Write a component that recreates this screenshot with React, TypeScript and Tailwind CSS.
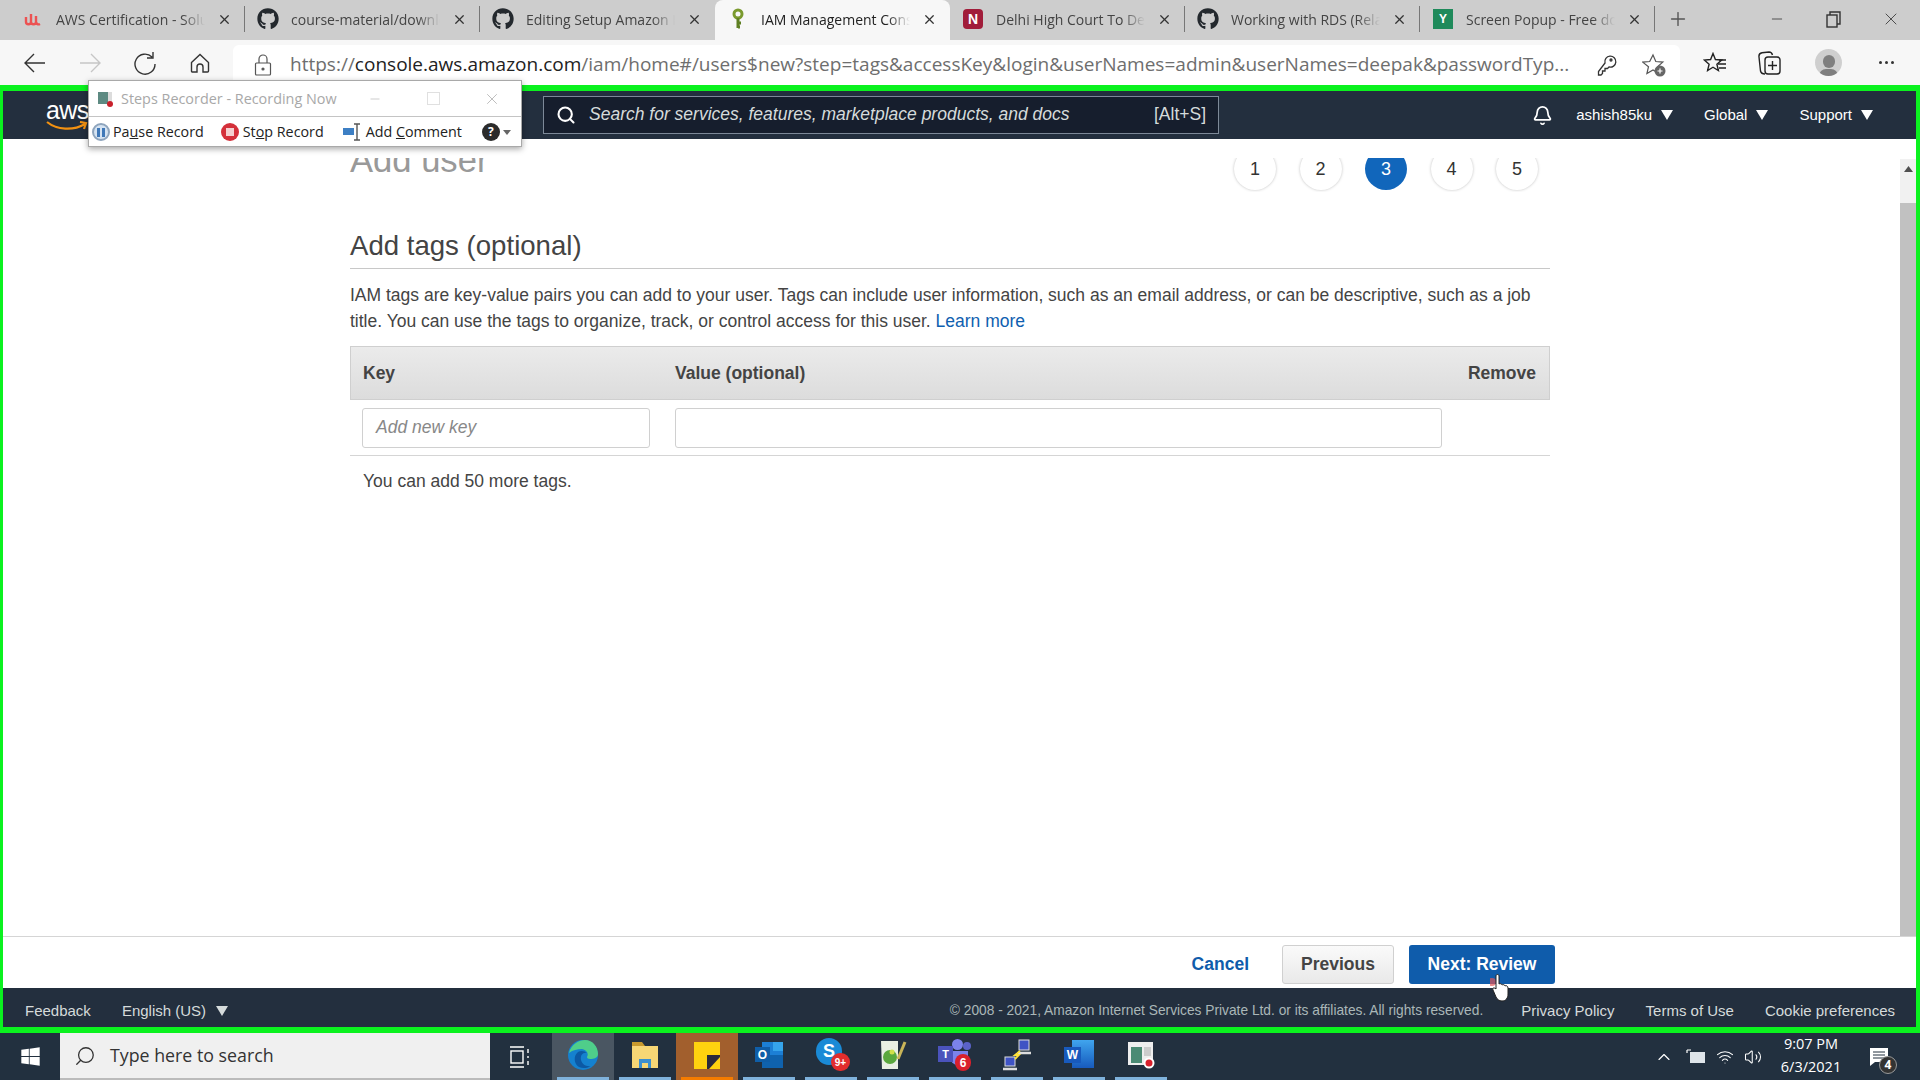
import React from "react";
import { Plus, X, Minus, Search, Bell, ChevronUp, Wifi, Volume2 } from "lucide-react";
import { FaGithub, FaWindows } from "react-icons/fa";

const uiFont = "font-['Open_Sans',sans-serif]";
const awsFont = "font-['Liberation_Sans',Arial,sans-serif]";

const Caret = ({ className = "" }: { className?: string }) => (
  <svg width="12" height="10" viewBox="0 0 12 10" className={className}>
    <path d="M0 0h12L6 10z" fill="currentColor" />
  </svg>
);

const Udemy = () => (
  <svg width="20" height="20" viewBox="0 0 20 20">
    <path d="M3 8v5c0 3 5 3 5 0V5M8 13c0 3 5 3 5 0V7M13 13c.5 2 2 3 4 2" fill="none" stroke="#ec5252" strokeWidth="2.4" />
  </svg>
);

const KeyIcon = () => (
  <svg width="20" height="22" viewBox="0 0 20 22">
    <circle cx="10" cy="6" r="4" fill="none" stroke="#7a9a2e" strokeWidth="3" />
    <path d="M10 10v10M10 15h3M10 19h2" stroke="#5e7f22" strokeWidth="3" fill="none" />
  </svg>
);

const NIcon = () => (
  <div className="w-5 h-5 rounded-sm bg-[#a11d3a] flex items-center justify-center text-white text-[14px] font-bold font-['Liberation_Sans',sans-serif]">N</div>
);

const YIcon = () => (
  <div className="w-5 h-5 bg-[#1f8a5b] flex items-center justify-center text-white text-[12px] font-bold font-['Liberation_Sans',sans-serif]">Y</div>
);

const Git = () => <FaGithub size={22} className="text-[#24292e]" />;

const tabs = [
  { title: "AWS Certification - Solutions", icon: <Udemy /> },
  { title: "course-material/download", icon: <Git /> },
  { title: "Editing Setup Amazon RDS", icon: <Git /> },
  { title: "IAM Management Console", icon: <KeyIcon />, active: true },
  { title: "Delhi High Court To Decide", icon: <NIcon /> },
  { title: "Working with RDS (Relational", icon: <Git /> },
  { title: "Screen Popup - Free download", icon: <YIcon /> },
];

function TabStrip() {
  return (
    <div className={`h-10 bg-[#cdcdcd] flex items-stretch pl-[10px] ${uiFont}`}>
      {tabs.map((t, i) => (
        <div key={t.title} className={`w-[235px] shrink-0 flex items-center pl-3 pr-[13px] pb-[2px] gap-[12px] text-[14px] ${t.active ? "bg-[#f7f7f7] rounded-t-lg text-[#222]" : "text-[#444]"}`}>
          <div className="w-[22px] flex justify-center shrink-0">{t.icon}</div>
          <div className="flex-1 overflow-hidden whitespace-nowrap [mask-image:linear-gradient(to_right,black_85%,transparent)]">{t.title}</div>
          <X size={15} className="shrink-0 text-[#333]" />
          {i !== 2 && i !== 3 && <div className="w-px h-[26px] bg-[#777] -mr-[13px] shrink-0" />}
        </div>
      ))}
      <div className="flex items-center pl-3 pb-[2px] text-[#555]"><Plus size={22} strokeWidth={1.5} /></div>
      <div className="ml-auto flex items-center pb-[2px] text-[#333]">
        <div className="w-[56px] flex justify-center"><Minus size={16} strokeWidth={1.2} /></div>
        <div className="w-[56px] flex justify-center">
          <svg width="15" height="17" viewBox="0 0 15 17" fill="none" stroke="#333" strokeWidth="1.4">
            <rect x="1" y="4" width="10" height="12" />
            <path d="M4 4V1h10v12h-3" />
          </svg>
        </div>
        <div className="w-[59px] flex justify-center"><X size={20} strokeWidth={1} /></div>
      </div>
    </div>
  );
}

function Toolbar() {
  return (
    <div className={`h-[45px] bg-[#f7f7f7] flex items-center pl-[7px] text-[#333] ${uiFont}`}>
      <div className="w-[55px] flex justify-center">
        <svg width="22" height="20" viewBox="0 0 22 20" fill="none" stroke="#333" strokeWidth="1.4"><path d="M21 10H1M10 1l-9 9 9 9" /></svg>
      </div>
      <div className="w-[55px] flex justify-center">
        <svg width="22" height="20" viewBox="0 0 22 20" fill="none" stroke="#c6c6c6" strokeWidth="1.4"><path d="M1 10h20M12 1l9 9-9 9" /></svg>
      </div>
      <div className="w-[55px] flex justify-center">
        <svg width="22" height="24" viewBox="0 0 22 24" fill="none" stroke="#333" strokeWidth="1.4"><path d="M18 6a10 10 0 1 0 3 7M19 1v6h-6" /></svg>
      </div>
      <div className="w-[55px] flex justify-center">
        <svg width="20" height="20" viewBox="0 0 20 20" fill="none" stroke="#333" strokeWidth="1.4"><path d="M1.5 9.5 10 1.500l8.500 8V18a1 1 0 0 1-1 1H13v-5a3 3 0 0 0-6 0v5H2.500a1 1 0 0 1-1-1z" /></svg>
      </div>
      <div className="w-[1447px] ml-[6px] h-[40px] mt-1 bg-white rounded-t-md flex items-center pl-[21px] pr-[14px] shrink-0">
        <svg width="18" height="22" viewBox="0 0 18 22" fill="none" stroke="#555" strokeWidth="1.2" className="shrink-0">
          <path d="M5 9V5a4 4 0 0 1 8 0v4" /><rect x="1.500" y="9" width="15" height="12" rx="1" /><circle cx="9" cy="15" r="1" fill="#555" />
        </svg>
        <div className="ml-[18px] text-[19.03px] text-[#6e6e6e] whitespace-nowrap overflow-hidden flex-1">
          https://<span className="text-[#222]">console.aws.amazon.com</span>/iam/home#/users$new?step=tags&amp;accessKey&amp;login&amp;userNames=admin&amp;userNames=deepak&amp;passwordTyp...
        </div>
        <svg width="20" height="22" viewBox="0 0 20 22" fill="none" stroke="#333" strokeWidth="1.3" className="ml-3 shrink-0">
          <path d="M8 9a5.500 5.500 0 1 1 4 4l-1.500 1.500H8V17H5.500v2.500L4 21H1.500v-3.500z" /><circle cx="14" cy="6" r="1" />
        </svg>
        <svg width="24" height="24" viewBox="0 0 24 24" className="ml-[25px] shrink-0">
          <path d="M11 2l2.800 6.500 7 .6-5.300 4.600 1.600 6.800-6.100-3.600-6.100 3.600 1.600-6.800L.7 9.100l7-.6z" fill="none" stroke="#555" strokeWidth="1.2" />
          <circle cx="18" cy="18" r="5.500" fill="#666" />
          <path d="M15.500 18h5M18 15.500v5" stroke="#fff" strokeWidth="1.2" />
        </svg>
      </div>
      <svg width="24" height="22" viewBox="0 0 24 22" fill="none" stroke="#222" strokeWidth="1.4" className="ml-[23px] shrink-0">
        <path d="M10 1.500l2.400 6 6.300.5-4.800 4.200 1.500 6.300L10 15.200l-5.400 3.300 1.500-6.300L1.300 8l6.300-.5z" />
        <path d="M16 8h7M15 12h8M16 16h7" />
      </svg>
      <svg width="24" height="26" viewBox="0 0 24 26" fill="none" stroke="#222" strokeWidth="1.4" className="ml-[31px] shrink-0">
        <path d="M7 24c-3 0-4-1-4.500-3L1 7c-.4-3 1-4 3-4.300l7-.7c2 0 3 1 3.500 3" />
        <rect x="7" y="7" width="15" height="17" rx="3" />
        <path d="M14.500 11v9M10 15.500h9" />
      </svg>
      <div className="ml-[33px] w-[27px] h-[27px] rounded-full bg-[#cfcfcf] flex flex-col items-center justify-end overflow-hidden shrink-0">
        <div className="w-[12px] h-[13px] rounded-full bg-[#7f7f7f] mb-[1px]" />
        <div className="w-[19px] h-[7px] rounded-t-full bg-[#7f7f7f]" />
      </div>
      <div className="ml-[37px] flex gap-[3px] shrink-0">
        <div className="w-[3px] h-[3px] rounded-full bg-[#333]" />
        <div className="w-[3px] h-[3px] rounded-full bg-[#333]" />
        <div className="w-[3px] h-[3px] rounded-full bg-[#333]" />
      </div>
    </div>
  );
}

function AwsNav() {
  return (
    <div className={`h-[48px] bg-[#232f3e] flex items-center text-white text-[15px] shrink-0 ${awsFont}`}>
      <div className="w-[540px] pl-[43px] flex flex-col">
        <div className="text-[25px] leading-[20px] tracking-tight">aws</div>
        <svg width="42" height="10" viewBox="0 0 42 10" className="mt-[1px]">
          <path d="M1 1c10 8 26 9 38 2M34 1l6 1-2 6" fill="none" stroke="#f29111" strokeWidth="2.200" />
        </svg>
      </div>
      <div className="w-[676px] h-[38px] -mt-[1px] bg-[#161e2d] border border-[#7d8998] flex items-center pl-3 pr-3 italic text-[#d5dbdb] text-[17.5px]">
        <Search size={20} strokeWidth={2.5} className="text-white mr-[13px] shrink-0" />
        <span className="flex-1">Search for services, features, marketplace products, and docs</span>
        <span className="not-italic">[Alt+S]</span>
      </div>
      <div className="flex-1 flex items-center justify-end pr-[43px]">
        <Bell size={21} strokeWidth={2} className="mr-[23px]" />
        <span>ashish85ku</span>
        <Caret className="ml-[9px] mr-[31px]" />
        <span>Global</span>
        <Caret className="ml-[9px] mr-[31px]" />
        <span>Support</span>
        <Caret className="ml-[9px]" />
      </div>
    </div>
  );
}

function Stepper() {
  return (
    <div className="flex gap-[23.5px] pr-[4px] pt-[1px] pb-[2px]">
      {[1, 2, 3, 4, 5].map(n => (
        <div key={n} className={`w-[42px] h-[42px] rounded-full flex items-center justify-center text-[18px] ${n === 3 ? "bg-[#1166bb] text-white" : "bg-white text-[#333] shadow-[0_0_3px_rgba(0,0,0,0.25)]"}`}>{n}</div>
      ))}
    </div>
  );
}

function Content() {
  return (
    <div className={`flex-1 min-w-0 flex flex-col ${awsFont}`}>
      <div className="h-[19px] shrink-0" />
      <div className="h-[34px] shrink-0 overflow-hidden pl-[347px] pr-[358px] flex justify-between items-start">
        <div className="text-[34.6px] leading-[34px] text-[#999] -mt-[15px]">Add user</div>
        <div className="-mt-[11px]"><Stepper /></div>
      </div>
      <div className="pl-[347px] pr-[350px] pt-[34px]">
        <h2 className="text-[27.6px] leading-[40px] text-[#444] pb-[2px] border-b border-[#c8c8c8]">Add tags (optional)</h2>
        <p className="mt-[13px] text-[17.5px] leading-[26px] text-[#444]">
          IAM tags are key-value pairs you can add to your user. Tags can include user information, such as an email address, or can be descriptive, such as a job title. You can use the tags to organize, track, or control access for this user. <span className="text-[#0f60b0]">Learn more</span>
        </p>
        <div className="mt-[12px] h-[54px] bg-gradient-to-b from-[#ebebeb] to-[#dcdcdc] border border-[#cfcfcf] flex items-center font-bold text-[17.5px] text-[#444]">
          <div className="w-[324px] pl-[12px]">Key</div>
          <div className="flex-1">Value (optional)</div>
          <div className="pr-[13px]">Remove</div>
        </div>
        <div className="h-[56px] border-b border-[#d5d5d5] flex items-center pl-[12px] gap-[25px]">
          <div className="w-[288px] h-[40px] bg-white border border-[#d0d0d0] rounded-[3px] flex items-center pl-[13px] italic text-[17.5px] text-[#888]">Add new key</div>
          <div className="w-[767px] h-[40px] bg-white border border-[#d0d0d0] rounded-[3px]" />
        </div>
        <div className="pl-[13px] pt-[12px] text-[17.5px] text-[#444]">You can add 50 more tags.</div>
      </div>
    </div>
  );
}

function Scrollbar() {
  return (
    <div className="w-[16px] shrink-0 flex flex-col pt-[20px]">
      <div className="h-[44px] bg-[#f1f1f1] flex justify-center pt-[7px]">
        <svg width="9" height="6" viewBox="0 0 9 6"><path d="M0 6h9L4.500 0z" fill="#505050" /></svg>
      </div>
      <div className="flex-1 bg-[#c1c1c1]" />
    </div>
  );
}

function ActionBar() {
  return (
    <div className={`h-[52px] bg-white border-t border-[#d5d5d5] shrink-0 flex items-center justify-end pr-[361px] pt-[4px] text-[17.5px] font-bold ${awsFont}`}>
      <span className="text-[#0f5cab] mr-[33px]">Cancel</span>
      <div className="w-[112px] h-[39px] rounded-[3px] border border-[#d0d0d0] bg-gradient-to-b from-[#fafafa] to-[#e9e9e9] text-[#444] flex items-center justify-center mr-[15px]">Previous</div>
      <div className="w-[146px] h-[39px] rounded-[3px] bg-[#0f5cab] text-white flex items-center justify-center">Next: Review</div>
    </div>
  );
}

function AwsFooter() {
  return (
    <div className={`h-[39px] bg-[#232f3e] shrink-0 flex items-center text-[15px] text-[#d5dbdb] pl-[22px] pt-[7px] ${awsFont}`}>
      <span>Feedback</span>
      <span className="ml-[31px]">English (US)</span>
      <Caret className="ml-[10px]" />
      <span className="ml-auto text-[13.76px] text-[#aab7b8]">© 2008 - 2021, Amazon Internet Services Private Ltd. or its affiliates. All rights reserved.</span>
      <span className="ml-[38px]">Privacy Policy</span>
      <span className="ml-[31px]">Terms of Use</span>
      <span className="ml-[31px] mr-[21px]">Cookie preferences</span>
    </div>
  );
}

function StepsRecorder() {
  return (
    <div className="absolute left-[88px] top-[80px] w-[434px] h-[67px] bg-white border border-[#a9a9a9] shadow-[0_2px_6px_rgba(0,0,0,0.35)] font-['Open_Sans',sans-serif] z-10">
      <div className="h-[36px] border-b border-[#c4c4c4] flex items-center pl-[8px] text-[14.4px] text-[#a8a8a8]">
        <svg width="18" height="18" viewBox="0 0 18 18" className="shrink-0 mr-[6px]">
          <rect x="1" y="2" width="10" height="12" fill="#5d8a82" />
          <rect x="11" y="2" width="4" height="10" fill="#dcdcdc" />
          <circle cx="13" cy="14" r="3" fill="#c8202b" />
        </svg>
        <span>Steps Recorder - Recording Now</span>
        <Minus size={14} strokeWidth={1} className="ml-[31px]" />
        <div className="w-[13px] h-[13px] border border-[#e0e0e0] ml-[45px]" />
        <X size={18} strokeWidth={1} className="ml-[43px]" />
      </div>
      <div className="h-[29px] pt-[1px] flex items-center pl-[3px] text-[14.3px] text-[#222]">
        <div className="w-[18px] h-[18px] rounded-full bg-[#d5e3f2] border-2 border-[#8fa5bd] flex items-center justify-center gap-[2px] mr-[3px]">
          <div className="w-[3px] h-[9px] bg-[#3f78b8]" />
          <div className="w-[3px] h-[9px] bg-[#3f78b8]" />
        </div>
        <span>Pa<u>u</u>se Record</span>
        <div className="w-[18px] h-[18px] rounded-full bg-[#d4303a] flex items-center justify-center ml-[17px] mr-[4px]">
          <div className="w-[8px] h-[8px] bg-[#f4d0d0]" />
        </div>
        <span>St<u>o</u>p Record</span>
        <svg width="20" height="18" viewBox="0 0 20 18" className="ml-[18px] mr-[4px]">
          <rect x="1" y="5" width="11" height="7" fill="#3d7fc4" />
          <path d="M15 1v16M12 1h6M12 17h6" stroke="#555" strokeWidth="1.4" fill="none" />
        </svg>
        <span>Add <u>C</u>omment</span>
        <div className="w-[18px] h-[18px] rounded-full bg-[#2b2b2b] text-white text-[12px] font-bold flex items-center justify-center ml-[20px]">?</div>
        <svg width="8" height="5" viewBox="0 0 8 5" className="ml-[3px]"><path d="M0 0h8L4 5z" fill="#666" /></svg>
      </div>
    </div>
  );
}

const TaskSlot = ({ children, bg = "", bar = "bg-[#7fb2dc]" }: { children: React.ReactNode; bg?: string; bar?: string }) => (
  <div className={`w-[62px] h-full shrink-0 flex flex-col items-center ${bg}`}>
    <div className="flex-1 flex items-center justify-center">{children}</div>
    <div className={`w-[52px] h-[3px] ${bar}`} />
  </div>
);

function Taskbar() {
  return (
    <div className="flex-1 bg-[#22303f] flex items-stretch text-white font-['Open_Sans',sans-serif]">
      <div className="w-[60px] flex items-center justify-center"><FaWindows size={21} /></div>
      <div className="w-[430px] bg-[#f0f0f0] border-b-2 border-[#bbb] flex items-center pl-[14px] text-[#333] text-[17.8px]">
        <Search size={22} strokeWidth={1.4} className="-scale-x-100 mr-[14px]" />
        Type here to search
      </div>
      <div className="w-[62px] flex items-center justify-center pr-[4px]">
        <svg width="22" height="24" viewBox="0 0 22 24" fill="none" stroke="#fff" strokeWidth="1.4">
          <path d="M2 2h14M2 22h14" /><rect x="3" y="6" width="12" height="12" /><path d="M20 4v4M20 11v2M20 16v4" />
        </svg>
      </div>
      <TaskSlot bg="bg-[#4a5662]">
        <svg width="32" height="32" viewBox="0 0 32 32">
          <circle cx="16" cy="16" r="15" fill="#1581cf" />
          <path d="M2 14C4 5 12 1 18 1c8 0 13 7 13 14 0 4-4 5-8 5-2 0-3-1-3-2 2-3 0-7-5-8-5 0-9 1-13 4z" fill="#4fce8a" />
          <path d="M12 28c-5-3-6-11-1-15 3-2 7-1 9 1-4-1-7 2-6 7 1 4 5 7 10 6-3 2-8 3-12 1z" fill="#0c59a4" />
        </svg>
      </TaskSlot>
      <TaskSlot>
        <svg width="28" height="28" viewBox="0 0 28 28">
          <path d="M1 1h10l3 4H1z" fill="#c99a2e" />
          <rect x="1" y="5" width="26" height="22" fill="#f8d775" />
          <path d="M8 27v-9h12v9h-3v-5h-6v5z" fill="#3c8fd0" />
        </svg>
      </TaskSlot>
      <TaskSlot bg="bg-[#a25f2d]" bar="bg-[#f57c00]">
        <svg width="26" height="27" viewBox="0 0 26 27">
          <rect width="26" height="27" fill="#ffd20f" />
          <path d="M26 13v2L15 27h-2V13z" fill="#2b2b3b" />
        </svg>
      </TaskSlot>
      <TaskSlot>
        <svg width="30" height="28" viewBox="0 0 30 28">
          <rect x="8" y="1" width="21" height="26" fill="#1c7fd6" />
          <path d="M19 1h10v9H19z" fill="#35a4ec" />
          <path d="M8 14l21 0v13H8z" fill="#0f62ae" />
          <rect x="1" y="6" width="15" height="15" fill="#0f5ea8" />
          <text x="8.500" y="18" textAnchor="middle" fontSize="12" fontWeight="700" fill="#fff" fontFamily="Liberation Sans">O</text>
        </svg>
      </TaskSlot>
      <TaskSlot>
        <div className="relative w-[34px] h-[34px] ml-[4px]">
          <div className="w-[26px] h-[27px] rounded-full bg-[#1a8ad6] flex items-center justify-center text-white font-bold text-[18px] font-['Liberation_Sans',sans-serif]">S</div>
          <div className="absolute right-0 bottom-[1px] w-[19px] h-[18px] rounded-full bg-[#e22d2d] flex items-center justify-center text-[10px] font-bold font-['Liberation_Sans',sans-serif]">9+</div>
        </div>
      </TaskSlot>
      <TaskSlot>
        <svg width="28" height="32" viewBox="0 0 28 32">
          <path d="M2 2h17v28H3z" fill="#e9efe3" />
          <circle cx="11" cy="18" r="7" fill="#5aa83e" />
          <circle cx="13" cy="13" r="2.500" fill="#d2e04a" />
          <path d="M19 20L26 3" stroke="#c9b458" strokeWidth="3" />
        </svg>
      </TaskSlot>
      <TaskSlot>
        <div className="relative w-[34px] h-[32px]">
          <div className="absolute right-[9px] top-0 w-[11px] h-[11px] rounded-full bg-[#7b83eb]" />
          <div className="absolute right-[1px] top-[3px] w-[8px] h-[8px] rounded-full bg-[#5a62c8]" />
          <div className="absolute right-[4px] top-[12px] w-[18px] h-[14px] rounded-b-lg bg-[#7b83eb]" />
          <div className="absolute left-0 top-[7px] w-[15px] h-[16px] bg-[#4b53bc] flex items-center justify-center text-[11px] font-bold font-['Liberation_Sans',sans-serif]">T</div>
          <div className="absolute right-[1px] bottom-0 w-[16px] h-[17px] rounded-full bg-[#d9202c] flex items-center justify-center text-[12px] font-bold font-['Liberation_Sans',sans-serif]">6</div>
        </div>
      </TaskSlot>
      <TaskSlot>
        <svg width="30" height="32" viewBox="0 0 30 32">
          <rect x="17" y="1" width="10" height="10" fill="#3f53c4" stroke="#ddd" />
          <rect x="3" y="18" width="10" height="9" fill="#3f53c4" stroke="#ddd" />
          <path d="M1 30h14M16 14h13" stroke="#ddd" strokeWidth="2.500" />
          <path d="M18 12l-5 4h4l-4 4" stroke="#ffe23a" strokeWidth="1.800" fill="none" />
        </svg>
      </TaskSlot>
      <TaskSlot>
        <div className="relative w-[30px] h-[30px]">
          <div className="absolute right-0 top-0 w-[22px] h-[28px] bg-gradient-to-b from-[#41a5ee] to-[#185abd]" />
          <div className="absolute left-0 top-[7px] w-[17px] h-[16px] bg-[#185abd] flex items-center justify-center text-[12px] font-bold font-['Liberation_Sans',sans-serif]">W</div>
        </div>
      </TaskSlot>
      <TaskSlot>
        <svg width="30" height="30" viewBox="0 0 30 30">
          <rect x="2" y="2" width="25" height="23" fill="#eee" />
          <rect x="5" y="7" width="11" height="16" fill="#4b8a74" />
          <rect x="18" y="7" width="7" height="9" fill="#ccc" />
          <circle cx="23" cy="23" r="5.500" fill="#fff" />
          <circle cx="23" cy="23" r="3.500" fill="#d9202c" />
        </svg>
      </TaskSlot>
      <div className="ml-auto flex items-center">
        <ChevronUp size={20} strokeWidth={1.4} className="mr-[12px]" />
        <svg width="20" height="18" viewBox="0 0 20 18" className="mr-[10px]">
          <rect x="4" y="4" width="15" height="11" fill="#dfe5ea" />
          <path d="M1 2v3M1 2h4" stroke="#fff" strokeWidth="1.200" />
        </svg>
        <Wifi size={18} strokeWidth={1.4} className="mr-[10px]" />
        <Volume2 size={18} strokeWidth={1.4} className="mr-[13px]" />
        <div className="w-[72px] -mt-[3px] text-center text-[14.5px] leading-[23px]">
          <div>9:07 PM</div>
          <div>6/3/2021</div>
        </div>
        <div className="relative w-[73px] pr-[10px] h-full flex items-center justify-center">
          <svg width="20" height="20" viewBox="0 0 20 20"><path d="M1 1h18v14H6l-5 4z" fill="#fff" /><path d="M4 5h12M4 8h12M4 11h12" stroke="#22303f" /></svg>
          <div className="absolute right-[23px] bottom-[6px] w-[18px] h-[18px] rounded-full bg-[#333] border border-[#999] flex items-center justify-center text-[12px] font-bold">4</div>
        </div>
      </div>
    </div>
  );
}

export default function App() {
  return (
    <div className="relative w-[1920px] h-[1080px] flex flex-col overflow-hidden bg-white">
      <TabStrip />
      <Toolbar />
      <div className="h-[948px] shrink-0 border-t-[6px] border-b-[6px] border-l-[3px] border-r-[4px] border-[#0bf21f] flex flex-col">
        <AwsNav />
        <div className="flex-1 min-h-0 flex">
          <Content />
          <Scrollbar />
        </div>
        <ActionBar />
        <AwsFooter />
      </div>
      <Taskbar />
      <StepsRecorder />
      {/* mouse pointer over the Next button */}
      <svg width="20" height="28" viewBox="0 0 20 28" className="absolute left-[1490px] top-[974px] z-10">
        <circle cx="2" cy="8" r="4" fill="#e25555" opacity="0.7" />
        <path d="M6 2c0-2 3-2 3 0v8c1-1 3 0 3 1 1-1 3 0 3 1 1-1 3 0 3 2v6c0 4-2 7-6 7-3 0-5-2-6-4l-3-7c-1-2 1-3 3-1z" fill="#fff" stroke="#222" strokeWidth="1" />
      </svg>
    </div>
  );
}
